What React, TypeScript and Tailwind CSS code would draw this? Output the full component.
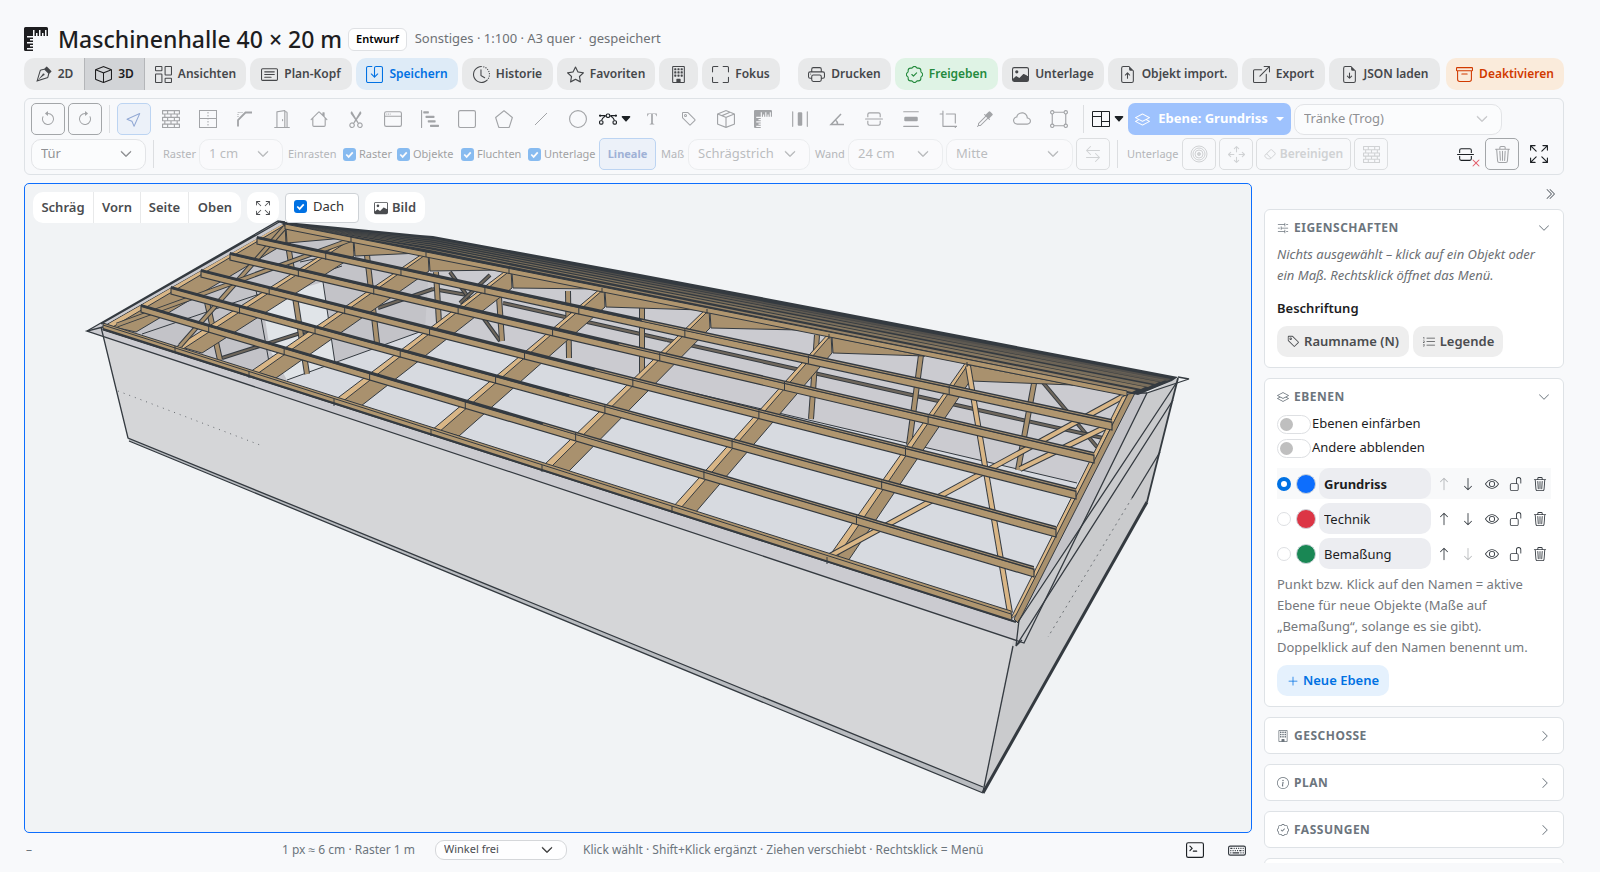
import type { ReactNode } from 'react';
import type { IconType } from 'react-icons';
import {
  BsArchive,
  BsArrowClockwise,
  BsArrowCounterclockwise,
  BsArrowDown,
  BsArrowLeftRight,
  BsArrowsFullscreen,
  BsArrowsMove,
  BsArrowUp,
  BsBarChartSteps,
  BsBezier,
  BsBoundingBoxCircles,
  BsBox,
  BsBoxArrowUpRight,
  BsBoxSeam,
  BsBricks,
  BsBuilding,
  BsCardText,
  BsCaretDownFill,
  BsChevronDoubleRight,
  BsChevronDown,
  BsChevronRight,
  BsCircle,
  BsClockHistory,
  BsCloud,
  BsColumnsGap,
  BsCrop,
  BsCursor,
  BsDistributeHorizontal,
  BsDistributeVertical,
  BsDoorOpen,
  BsEraser,
  BsEye,
  BsEyedropper,
  BsFileEarmarkArrowDown,
  BsFileEarmarkArrowUp,
  BsFonts,
  BsFullscreen,
  BsHouse,
  BsHr,
  BsImage,
  BsInfoCircle,
  BsKeyboard,
  BsLayers,
  BsListOl,
  BsPatchCheck,
  BsPentagon,
  BsPlusLg,
  BsPrinter,
  BsRulers,
  BsScissors,
  BsSliders2,
  BsSquare,
  BsStar,
  BsTag,
  BsTerminal,
  BsTrash3,
  BsUnlock,
  BsVectorPen,
  BsWindow,
  BsX,
} from 'react-icons/bs';

type Pt = [number, number];

/* ---------- small icons that the icon set lacks ---------- */

function IconSave({ size = 17 }: { size?: number }) {
  return (
    <svg width={size} height={size} viewBox="0 0 16 16" fill="none" stroke="currentColor" strokeLinecap="round" strokeLinejoin="round">
      <path d="M5.5 .5H2A1.5 1.5 0 0 0 .5 2v12A1.5 1.5 0 0 0 2 15.500h12a1.500 1.500 0 0 0 1.500-1.500V2A1.500 1.500 0 0 0 14 .5H9.500A1.500 1.500 0 0 0 8 2v8" />
      <path d="M5 7.500l3 3 3-3" />
    </svg>
  );
}

function IconWindowPane() {
  return (
    <svg width="18" height="18" viewBox="0 0 18 18" fill="none" stroke="currentColor">
      <rect x=".5" y=".5" width="17" height="17" />
      <path d="M.5 8.500h17" />
      <path d="M9 2v14" strokeDasharray="1.500 1.500" />
    </svg>
  );
}

function IconBevel() {
  return (
    <svg width="18" height="18" viewBox="0 0 18 18" fill="none" stroke="currentColor">
      <path d="M2 16.500V10L9.500 2.500H16" strokeWidth="1.800" />
      <path d="M2 7V2.500h5" strokeDasharray="1 1" />
    </svg>
  );
}

function IconAngle() {
  return (
    <svg width="18" height="18" viewBox="0 0 18 18" fill="none" stroke="currentColor" strokeWidth="1.500">
      <path d="M13 4L3 14.500h13" />
      <path d="M7.500 10c1.500 1 2 2.500 2 4.500" />
    </svg>
  );
}

function IconLine() {
  return (
    <svg width="18" height="18" viewBox="0 0 18 18" fill="none" stroke="currentColor">
      <path d="M3 15L15 3" />
    </svg>
  );
}

function IconFloorPlan() {
  return (
    <svg width="18" height="18" viewBox="0 0 18 18" fill="none" stroke="currentColor">
      <path d="M.5 1.500h17v15H.5z" />
      <path d="M.5 6.500h9M9.500 1.500v15M9.500 11.500h8" />
    </svg>
  );
}

function IconRings() {
  return (
    <svg width="18" height="18" viewBox="0 0 18 18" fill="none" stroke="currentColor">
      <circle cx="9" cy="9" r="8" />
      <circle cx="9" cy="9" r="6" />
      <circle cx="9" cy="9" r="4" />
      <circle cx="9" cy="9" r="1.500" fill="currentColor" />
    </svg>
  );
}

/* ---------- form controls ---------- */

function Tick({ label, className = '', textClass = '' }: { label: string; className?: string; textClass?: string }) {
  return (
    <label className={`flex items-center ${className}`}>
      <span className="grid shrink-0">
        <input
          type="checkbox"
          defaultChecked
          className="col-start-1 row-start-1 size-[13px] appearance-none rounded-[3px] bg-[#0071e3]"
        />
        <svg className="pointer-events-none col-start-1 row-start-1 size-[13px]" viewBox="0 0 12 12" fill="none" stroke="#fff" strokeWidth="1.600">
          <path d="M3 6l2.200 2.200L9 4" />
        </svg>
      </span>
      <span className={textClass}>{label}</span>
    </label>
  );
}

function Picker({
  label,
  value,
  className = '',
  selectClass = 'h-[31px] rounded-[10px] pl-[9px] text-[13px]',
}: {
  label: string;
  value: string;
  className?: string;
  selectClass?: string;
}) {
  return (
    <span className={`grid shrink-0 items-center ${className}`}>
      <select
        aria-label={label}
        defaultValue={value}
        className={`col-start-1 row-start-1 w-full appearance-none border border-[#d5d7da] bg-white/90 text-[#4a4c4f] ${selectClass}`}
      >
        <option>{value}</option>
      </select>
      <BsChevronDown size={12} strokeWidth={1} className="pointer-events-none col-start-1 row-start-1 mr-[14px] justify-self-end" />
    </span>
  );
}

/* ---------- header ---------- */

type Action = { label?: string; icon: ReactNode; tone?: string; width: string };

const grey = 'bg-[#e8e9ea] text-[#45474a]';

const leftActions: Action[] = [
  { label: 'Plan-Kopf', icon: <BsCardText size={17} />, width: 'w-[102px]' },
  { label: 'Speichern', icon: <IconSave />, tone: 'bg-[#deebf7] text-[#0071e3]', width: 'w-[102px]' },
  { label: 'Historie', icon: <BsClockHistory size={17} />, width: 'w-[91px]' },
  { label: 'Favoriten', icon: <BsStar size={17} />, width: 'w-[98px]' },
  { icon: <BsBuilding size={17} />, width: 'w-[39px]' },
  { label: 'Fokus', icon: <BsFullscreen size={17} />, width: 'w-[78px]' },
];

const rightActions: Action[] = [
  { label: 'Drucken', icon: <BsPrinter size={17} />, width: 'w-[93px]' },
  { label: 'Freigeben', icon: <BsPatchCheck size={17} />, tone: 'bg-[#dff3e5] text-[#248a3d]', width: 'w-[103px]' },
  { label: 'Unterlage', icon: <BsImage size={17} />, width: 'w-[102px]' },
  { label: 'Objekt import.', icon: <BsFileEarmarkArrowUp size={17} />, width: 'w-[130px]' },
  { label: 'Export', icon: <BsBoxArrowUpRight size={17} />, width: 'w-[83px]' },
  { label: 'JSON laden', icon: <BsFileEarmarkArrowDown size={17} />, width: 'w-[111px]' },
];

function ActionButton({ label, icon, tone = grey, width }: Action) {
  return (
    <button
      aria-label={label ?? 'Gebäude'}
      className={`flex h-8 shrink-0 items-center justify-center gap-[6px] rounded-[10px] text-[12px] font-semibold whitespace-nowrap ${tone} ${width}`}
    >
      {icon}
      {label}
    </button>
  );
}

function Header() {
  return (
    <header>
      <div className="flex h-6 items-center">
        <BsRulers size={24} className="text-[#1d1d1f]" />
        <h1 className="ml-[10px] text-[23px] leading-6 font-medium whitespace-nowrap text-[#1d1d1f]">Maschinenhalle 40 × 20 m</h1>
        <span className="ml-[6px] flex h-[23px] items-center rounded-[6px] border border-[#dfe1e4] bg-white px-[7px] text-[11px] font-semibold text-black">
          Entwurf
        </span>
        <p className="ml-2 text-[13px] whitespace-pre text-[#6e7175]">Sonstiges · 1:100 · A3 quer ·  gespeichert</p>
      </div>
      <div className="mt-[7px] flex items-center gap-1">
        <div className="flex h-8 overflow-hidden rounded-[10px] bg-[#e8e9ea] text-[12px] font-semibold text-[#45474a]">
          <button className="flex w-[60px] items-center justify-center gap-[6px]">
            <BsVectorPen size={17} />
            2D
          </button>
          <button className="flex w-[61px] items-center justify-center gap-[6px] border-x border-[#b4b6b9] bg-[#d2d4d7] text-[#1d1d1f]">
            <BsBox size={17} />
            3D
          </button>
          <button className="flex w-[101px] items-center justify-center gap-[6px]">
            <BsColumnsGap size={17} />
            Ansichten
          </button>
        </div>
        {leftActions.map((a, i) => (
          <ActionButton key={i} {...a} />
        ))}
        <div className="ml-auto flex gap-1">
          {rightActions.map((a) => (
            <ActionButton key={a.label} {...a} />
          ))}
        </div>
        <div className="ml-[2px]">
          <ActionButton label="Deaktivieren" icon={<BsArchive size={17} />} tone="bg-[#faebdb] text-[#d13a00]" width="w-[118px]" />
        </div>
      </div>
    </header>
  );
}

/* ---------- toolbar ---------- */

const tools: { name: string; icon: ReactNode }[] = [
  { name: 'Wand', icon: <BsBricks size={18} /> },
  { name: 'Fenster', icon: <IconWindowPane /> },
  { name: 'Ecke', icon: <IconBevel /> },
  { name: 'Tür', icon: <BsDoorOpen size={18} /> },
  { name: 'Haus', icon: <BsHouse size={18} /> },
  { name: 'Schneiden', icon: <BsScissors size={18} /> },
  { name: 'Tor', icon: <BsWindow size={18} /> },
  { name: 'Treppe', icon: <BsBarChartSteps size={18} /> },
  { name: 'Rechteck', icon: <BsSquare size={18} /> },
  { name: 'Polygon', icon: <BsPentagon size={18} /> },
  { name: 'Linie', icon: <IconLine /> },
  { name: 'Kreis', icon: <BsCircle size={18} /> },
];

const moreTools: { name: string; icon: ReactNode }[] = [
  { name: 'Text', icon: <BsFonts size={18} /> },
  { name: 'Etikett', icon: <BsTag size={16} /> },
  { name: 'Objekt', icon: <BsBoxSeam size={18} /> },
  { name: 'Maß', icon: <BsRulers size={18} /> },
  { name: 'Kette', icon: <BsDistributeHorizontal size={18} /> },
  { name: 'Winkel', icon: <IconAngle /> },
  { name: 'Schnitt', icon: <BsHr size={18} /> },
  { name: 'Verteilen', icon: <BsDistributeVertical size={18} /> },
  { name: 'Zuschneiden', icon: <BsCrop size={18} /> },
  { name: 'Pipette', icon: <BsEyedropper size={16} /> },
  { name: 'Wolke', icon: <BsCloud size={18} /> },
  { name: 'Bereich', icon: <BsBoundingBoxCircles size={18} /> },
];

const iconButton = 'flex h-8 w-[34px] shrink-0 items-center justify-center';

function Divider({ className = 'mx-1' }: { className?: string }) {
  return <span className={`h-7 w-px shrink-0 bg-[#dcdee1] ${className}`} />;
}

function Toolbar() {
  return (
    <div className="mt-2 flex flex-col gap-[3px] rounded-[6px] border border-[#dee2e6] px-[6px] py-1 text-[11px]">
      <div className="flex items-center gap-[3px] text-[#a2a4a7]">
        <button aria-label="Rückgängig" className={`${iconButton} rounded-[5px] border border-[#a3a6a9]`}>
          <BsArrowCounterclockwise size={16} />
        </button>
        <button aria-label="Wiederholen" className={`${iconButton} rounded-[5px] border border-[#a3a6a9]`}>
          <BsArrowClockwise size={16} />
        </button>
        <Divider />
        <button aria-label="Auswahl" className={`${iconButton} rounded-[5px] border border-[#bcd4f2] bg-[#ecf1f9] text-[#91a8d4]`}>
          <BsCursor size={16} />
        </button>
        {tools.map((t) => (
          <button key={t.name} aria-label={t.name} className={iconButton}>
            {t.icon}
          </button>
        ))}
        <button aria-label="Kurve" className={`${iconButton} gap-[3px] text-[#1d2125]`}>
          <BsBezier size={18} />
          <BsCaretDownFill size={12} />
        </button>
        {moreTools.map((t) => (
          <button key={t.name} aria-label={t.name} className={iconButton}>
            {t.icon}
          </button>
        ))}
        <Divider />
        <button aria-label="Raumaufteilung" className={`${iconButton} gap-[3px] text-[#1d2125]`}>
          <IconFloorPlan />
          <BsCaretDownFill size={12} />
        </button>
        <button className="flex h-8 w-[163px] items-center justify-center gap-2 rounded-[7px] bg-[#9ec2fd] text-[13px] font-bold whitespace-nowrap text-white">
          <BsLayers size={15} />
          Ebene: Grundriss
          <svg width="8" height="4" viewBox="0 0 8 4" fill="currentColor">
            <path d="M0 0h8L4 4z" />
          </svg>
        </button>
        <Picker label="Objekttyp" value="Tränke (Trog)" className="w-[208px] opacity-60" />
      </div>

      <div className="flex items-center text-[#b4b6b9]">
        <Picker label="Bauteil" value="Tür" className="w-[115px] text-[#3a3c3f] opacity-60" />
        <Divider className="ml-[7px] mr-[9px]" />
        <span className="w-9">Raster</span>
        <Picker label="Raster" value="1 cm" className="w-[84px] text-[#3a3c3f] opacity-35" />
        <span className="ml-[5px] w-[55px]">Einrasten</span>
        <Tick label="Raster" className="w-[54px] gap-[3px] opacity-45" textClass="text-[#333]" />
        <Tick label="Objekte" className="w-16 gap-[3px] opacity-45" textClass="text-[#333]" />
        <Tick label="Fluchten" className="w-[67px] gap-[3px] opacity-45" textClass="text-[#333]" />
        <Tick label="Unterlage" className="w-[71px] gap-[3px] opacity-45" textClass="text-[#333]" />
        <button className="h-8 w-[57px] rounded-[5px] border border-[#bcd4f2] bg-[#ecf1f9] text-[11px] font-bold text-[#9fb1d6]">Lineale</button>
        <span className="ml-[5px] w-[27px]">Maß</span>
        <Picker label="Maßlinie" value="Schrägstrich" className="w-[122px] text-[#3a3c3f] opacity-35" />
        <span className="ml-[5px] w-[33px]">Wand</span>
        <Picker label="Wandstärke" value="24 cm" className="w-[95px] text-[#3a3c3f] opacity-35" />
        <Picker label="Wandachse" value="Mitte" className="ml-[3px] w-[127px] text-[#3a3c3f] opacity-35" />
        <button aria-label="Tauschen" className={`${iconButton} ml-[3px] rounded-[5px] border border-[#dcdee0] text-[#d0d2d4]`}>
          <BsArrowLeftRight size={16} />
        </button>
        <Divider className="ml-[7px] mr-[9px]" />
        <span className="w-[55px]">Unterlage</span>
        <div className="flex gap-[3px] text-[#d0d2d4]">
          <button aria-label="Kalibrieren" className={`${iconButton} rounded-[5px] border border-[#dcdee0]`}>
            <IconRings />
          </button>
          <button aria-label="Verschieben" className={`${iconButton} rounded-[5px] border border-[#dcdee0]`}>
            <BsArrowsMove size={17} />
          </button>
          <button className="flex h-8 w-[95px] items-center justify-center gap-1 rounded-[5px] border border-[#dcdee0] text-[12px] font-semibold">
            <BsEraser size={12} />
            Bereinigen
          </button>
          <button aria-label="Wände erkennen" className={`${iconButton} rounded-[5px] border border-[#dcdee0]`}>
            <BsBricks size={17} />
          </button>
        </div>
        <div className="ml-auto flex items-center gap-[3px] pr-px text-[#1d2125]">
          <button aria-label="Schnitt löschen" className={iconButton}>
            <span className="relative">
              <BsHr size={17} />
              <BsX size={16} className="absolute -right-[10px] -bottom-2 text-[#e35d6a]" />
            </span>
          </button>
          <button aria-label="Löschen" className={`${iconButton} rounded-[5px] border border-[#a3a6a9] text-[#a2a4a7]`}>
            <BsTrash3 size={17} />
          </button>
          <button aria-label="Vollbild" className={iconButton}>
            <BsArrowsFullscreen size={18} />
          </button>
        </div>
      </div>
    </div>
  );
}

/* ---------- 3D view ---------- */

const INK = '#343a40';
const WOOD = '#a9916e';
const WOOD_LIGHT = '#d9b686';

// rafter feet and heads, from the left gable to the right one
const ridge: Pt[] = [[283, 224], [351, 237], [426, 252], [509, 269], [602, 288], [707, 309], [829, 334], [967, 362], [1127, 393]];
const eave: Pt[] = [[103, 326], [175, 347], [249, 372], [334, 400], [431, 430], [542, 466], [672, 507], [827, 558], [1011, 619]];
const footWidth = [33, 27, 27, 27, 28, 26, 23, 19, 6];

// purlins between eave and ridge, upper one first
const purlins: [Pt, Pt][] = [
  [[257, 238], [1112, 422]],
  [[230, 254], [1094, 455]],
  [[201, 271], [1076, 491]],
  [[171, 288], [1056, 529]],
  [[141, 306], [1034, 569]],
];

const posts: [Pt, Pt][] = [
  [[286, 231], [293, 277]],
  [[207, 302], [220, 360]],
  [[295, 297], [307, 374]],
  [[367, 255], [377, 343]],
  [[436, 272], [439, 323]],
  [[499, 297], [502, 341]],
  [[568, 291], [569, 358]],
  [[642, 308], [642, 374]],
  [[817, 335], [811, 419]],
  [[921, 355], [909, 445]],
  [[1035, 378], [1018, 470]],
];

const braces: [Pt, Pt][] = [
  [[222, 358], [310, 330]],
  [[378, 308], [433, 289]],
  [[433, 289], [467, 295]],
  [[450, 272], [500, 341]],
  [[490, 275], [460, 303]],
  [[1040, 379], [1097, 447]],
  [[503, 303], [667, 340]],
  [[667, 340], [1103, 438]],
];

const roofBraces: [Pt, Pt][] = [
  [[285, 227], [180, 346]],
  [[117, 325], [350, 240]],
  [[830, 556], [1122, 397]],
  [[1010, 613], [968, 366]],
  [[1020, 469], [1112, 424]],
];

// far purlins: height of the line where the roof edge bends, and its right end
const farPurlins: [number, Pt][] = [
  [250, [1136, 390]],
  [247, [1145, 387]],
  [245, [1152, 385]],
  [243, [1159, 382]],
  [241, [1165, 380]],
  [239, [1171, 379]],
];

const pts = (list: Pt[]) => list.map((p) => p.join(',')).join(' ');
const mix = (a: Pt, b: Pt, t: number): Pt => [a[0] + (b[0] - a[0]) * t, a[1] + (b[1] - a[1]) * t];

// where a purlin crosses a rafter
function cross([a, b]: [Pt, Pt], [c, d]: [Pt, Pt]): Pt {
  const r = [b[0] - a[0], b[1] - a[1]];
  const s = [d[0] - c[0], d[1] - c[1]];
  const t = ((c[0] - a[0]) * s[1] - (c[1] - a[1]) * s[0]) / (r[0] * s[1] - r[1] * s[0]);
  return mix(a, b, t);
}

function Bar({ line: [a, b], width, fill }: { line: [Pt, Pt]; width: number; fill: string }) {
  return (
    <g>
      <line x1={a[0]} y1={a[1]} x2={b[0]} y2={b[1]} stroke={INK} strokeWidth={width} />
      <line x1={a[0]} y1={a[1]} x2={b[0]} y2={b[1]} stroke={fill} strokeWidth={width - 2} />
    </g>
  );
}

function Purlin({ line: [a, b], ticks }: { line: [Pt, Pt]; ticks: Pt[] }) {
  return (
    <g>
      <polygon points={pts([a, b, [b[0], b[1] + 8], [a[0], a[1] + 6]])} fill="#b0966f" stroke={INK} strokeWidth="1.200" />
      <polygon points={pts([[a[0], a[1] - 2], [b[0], b[1] - 3], [b[0], b[1] + 1], [a[0], a[1] + 1]])} fill={INK} />
      <line x1={mix(a, b, 0.45)[0]} y1={mix(a, b, 0.45)[1] - 0.5} x2={b[0]} y2={b[1] - 1} stroke={WOOD_LIGHT} strokeWidth="1" opacity=".7" />
      {ticks.map((t, i) => (
        <line key={i} x1={t[0]} y1={t[1] - 1} x2={t[0]} y2={t[1] + 7} stroke={INK} strokeWidth="1" />
      ))}
    </g>
  );
}

function Building() {
  return (
    <svg viewBox="25 184 1226 648" className="block h-full w-full" role="img" aria-label="3D-Ansicht der Halle">
      <defs>
        <clipPath id="roof-opening">
          <polygon points="103,326 283,224 1130,393 1012,620" />
        </clipPath>
      </defs>

      {/* outer walls */}
      <polygon points="101,327 1018,622 1013,646 983,792 128,438" fill="#d5d6d8" />
      <polygon points="1178,378 1147,502 983,792 1013,640 1024,600 1100,450" fill="#cacbcd" />
      <polygon points="1146,393 1178,378 1024,643 1012,622 1135,392" fill="#cacbcd" />
      <polygon points="1127,393 1147,393 1078,530 1016,622" fill="#c3c3c8" />
      <polygon points="103,326 1012,620 1024,643 87,331" fill="#cbcbd0" />
      <polygon points="128,438 983,787 983,793 129,441" fill="#b9bcc0" />
      <polygon points="278,221 283,224 103,327 87,331" fill="#cbcbd0" />

      {/* inside */}
      <g clipPath="url(#roof-opening)">
        <polygon points="103,326 283,224 1130,393 1012,620" fill="#d7dae0" />
        <polygon points="425,330 1077,483 1130,393 283,224 420,245" fill="#cbcbd0" />
        <polygon points="100,326 283,220 430,250 425,330 287,380 150,430" fill="#c3c3c8" />
        <polygon points="262,300 323,282 335,363 287,380 270,350" fill="#e0e4e8" />
        <polyline points="287,380 425,330 1077,483" fill="none" stroke={INK} strokeWidth="1" />
        <path d="M142 334l200-68M256 290l13 72M323 282l12 81M300 262l105-22M400 320l25 10" fill="none" stroke={INK} strokeWidth="1" />
        {braces.map((b, i) => (
          <Bar key={i} line={b} width={4} fill="#6f675c" />
        ))}
        {posts.map((p, i) => (
          <Bar key={i} line={p} width={6} fill={WOOD} />
        ))}
        {/* far side of the rafters */}
        {ridge.slice(0, 8).map((r, i) => {
          const next = ridge[i + 1];
          return (
            <polygon
              key={i}
              points={pts([[r[0] + 3, r[1] + 3], [next[0] - (i > 4 ? i * 12 - 30 : 6), next[1] - (i > 4 ? i * 2 - 6 : -1)], [r[0] + 4, r[1] + 19]])}
              fill={WOOD}
              stroke={INK}
              strokeWidth="1"
            />
          );
        })}
        {ridge.slice(0, 8).map((r, i) => {
          const e = eave[i];
          return (
            <g key={i} stroke={INK} strokeWidth="1">
              <polygon points={pts([[r[0] + 2, r[1]], [r[0] + 3, r[1] + 19], [e[0] + footWidth[i], e[1] + 6], [e[0] + 6, e[1]]])} fill={WOOD} />
              <polygon points={pts([[r[0] - 1, r[1]], [r[0] + 2, r[1] + 1], [e[0] + 8, e[1] + 2], [e[0] + 1, e[1]]])} fill={WOOD_LIGHT} />
            </g>
          );
        })}
        {roofBraces.map((b, i) => (
          <Bar key={i} line={b} width={i < 2 ? 5 : 6} fill={i < 2 ? WOOD : WOOD_LIGHT} />
        ))}
      </g>

      {/* right gable rafter */}
      <polygon points="1122,397 1128,394 1018,613 1010,620" fill={WOOD_LIGHT} stroke={INK} strokeWidth="1" />
      <polygon points="1128,394 1135,393 1018,623 1014,619" fill={WOOD} stroke={INK} strokeWidth="1" />

      {purlins.map((p, i) => (
        <Purlin key={i} line={p} ticks={ridge.slice(1, 8).map((r, k) => cross(p, [r, eave[k + 1]]))} />
      ))}

      {/* eave purlin */}
      <polygon points="103,323 1011,611 1012,621 103,330" fill="#b0966f" stroke={INK} strokeWidth="1" />
      <path d="M103 325L1011 614" stroke={INK} strokeWidth="1" />
      <path d="M103 329L1016 622" stroke={INK} strokeWidth="2" />
      {eave.slice(1, 8).map((e, i) => (
        <line key={i} x1={e[0]} y1={e[1] - 1} x2={e[0]} y2={e[1] + 6} stroke={INK} />
      ))}

      {/* far roof side seen edge-on, closely stacked purlins */}
      <polygon points="276,221 420,235 433,236 640,274 850,314 1178,377 1172,381 1138,395 1127,393 283,224" fill={INK} />
      {farPurlins.map(([y, e], i) => (
        <polygon
          key={i}
          points={pts([[290, 225], [433, y], e, [e[0] - 4, e[1] + 2], [433, y + 0.6]])}
          fill={WOOD}
          opacity={0.85 - i * 0.12}
        />
      ))}
      <polygon points="285,224 1127,391 1127,396 285,229" fill="#b0966f" stroke={INK} strokeWidth="1" />
      {ridge.slice(1, 8).map((r, i) => (
        <line key={i} x1={r[0]} y1={r[1]} x2={r[0]} y2={r[1] + 5} stroke={INK} />
      ))}

      {/* outlines */}
      <g fill="none" stroke={INK} strokeWidth="1.300">
        <path d="M103 327L87 331L1024 643L1147 393L1189 379L1178 377" />
        <path d="M87 331L278 221L285 222M101 324L281 221" />
        <path d="M101 327L128 438L983 787M129 441L983 793" />
        <path d="M1135 393L1147 393M1177 382L1018 622M1173 400L1016 646L1019 620M1022 640L1016 646" />
        <path d="M1178 378L1147 502" strokeWidth="1.800" />
        <path d="M1147 502L983 793" strokeWidth="3" />
        <path d="M1013 646L983 792" />
        <path d="M1160 452L1132 498" />
        <path d="M1132 498L1048 637" strokeWidth="1" strokeDasharray="2 4" opacity=".6" />
        <path d="M118 391L260 445" strokeWidth="1" strokeDasharray="1 5" opacity=".7" />
      </g>
    </svg>
  );
}

function Viewport() {
  const views = [
    { label: 'Schräg', width: 'w-[61px]' },
    { label: 'Vorn', width: 'w-[47px]' },
    { label: 'Seite', width: 'w-12' },
    { label: 'Oben', width: 'w-[52px]' },
  ];
  return (
    <div className="relative min-h-0 flex-1 overflow-hidden rounded-[5px] border border-[#0d6efd] bg-[#f1f3f5]">
      <Building />
      <div className="absolute top-2 left-2 flex items-start text-[13px] font-semibold text-[#4a4c4f]">
        <div className="flex h-[31px] divide-x divide-[#e8e9ea] overflow-hidden rounded-[10px] bg-white">
          {views.map((v) => (
            <button key={v.label} className={v.width}>
              {v.label}
            </button>
          ))}
        </div>
        <button aria-label="Einpassen" className="ml-[6px] flex h-[31px] w-8 items-center justify-center rounded-[10px] bg-white">
          <BsArrowsFullscreen size={14} />
        </button>
        <div className="ml-[6px] mt-px flex h-[30px] w-[74px] items-start rounded-[4px] border border-[#ced2d6] bg-white pt-[3px] pl-2 font-normal text-[#333]">
          <Tick label="Dach" className="gap-[6px]" />
        </div>
        <button className="ml-[6px] flex h-[31px] w-[60px] items-center justify-center gap-1 rounded-[10px] bg-white">
          <BsImage size={14} />
          Bild
        </button>
      </div>
    </div>
  );
}

function StatusBar() {
  return (
    <div className="flex h-[30px] items-center pt-[3px] text-[12px] whitespace-nowrap text-[#6c757d]">
      <span className="w-[258px] pl-[2px]">–</span>
      <span className="w-[153px]">1 px ≈ 6 cm · Raster 1 m</span>
      <Picker
        label="Winkel"
        value="Winkel frei"
        className="w-[132px] text-[#333]"
        selectClass="h-5 rounded-[9px] pl-2 text-[11px]"
      />
      <span className="ml-4">Klick wählt · Shift+Klick ergänzt · Ziehen verschiebt · Rechtsklick = Menü</span>
      <button aria-label="Befehlszeile" className="ml-auto text-[#1d2125]">
        <BsTerminal size={18} />
      </button>
      <button aria-label="Tastenkürzel" className="mr-[6px] ml-6 text-[#343a40]">
        <BsKeyboard size={18} />
      </button>
    </div>
  );
}

/* ---------- sidebar ---------- */

function PanelHead({ icon: Icon, title, open = false }: { icon: IconType; title: string; open?: boolean }) {
  return (
    <button className="flex w-full items-center gap-[5px] text-[12px] leading-[21px] font-bold tracking-[0.5px] text-[#6c757d]">
      <Icon size={12} />
      {title}
      {open ? <BsChevronDown size={12} className="mr-px ml-auto" /> : <BsChevronRight size={12} className="ml-auto" />}
    </button>
  );
}

const layers = [
  { name: 'Grundriss', color: 'bg-[#0d6efd]', active: true },
  { name: 'Technik', color: 'bg-[#dc3545]', active: false },
  { name: 'Bemaßung', color: 'bg-[#198754]', active: false },
];

function Switch({ label }: { label: string }) {
  return (
    <label className="flex h-6 items-center gap-px text-[#1d1d1f]">
      <input
        type="checkbox"
        role="switch"
        className="h-[19px] w-[34px] shrink-0 appearance-none rounded-full border border-[#dee0e3] bg-white before:m-[2px] before:block before:size-[13px] before:rounded-full before:bg-[#bfbfbf]"
      />
      {label}
    </label>
  );
}

function Sidebar() {
  const card = 'shrink-0 rounded-[6px] border border-[#dee2e6] bg-white px-3';
  return (
    <aside className="flex w-[300px] shrink-0 flex-col gap-[10px] overflow-hidden text-[13px]">
      <button aria-label="Seitenleiste einklappen" className="mr-2 -mb-[6px] flex h-[22px] shrink-0 items-center self-end text-[#495057]">
        <BsChevronDoubleRight size={12} />
      </button>

      <section className={`${card} pt-[7px] pb-[10px]`}>
        <PanelHead icon={BsSliders2} title="EIGENSCHAFTEN" open />
        <p className="mt-[6px] leading-[21px] text-[#6c6f73] italic">
          Nichts ausgewählt – klick auf ein Objekt oder ein Maß. Rechtsklick öffnet das Menü.
        </p>
        <h3 className="mt-3 leading-5 font-semibold text-[#1d1d1f]">Beschriftung</h3>
        <div className="mt-2 flex gap-1 font-semibold text-[#4a4c4f]">
          <button className="flex h-[31px] w-[132px] items-center justify-center gap-1 rounded-[10px] bg-[#eee]">
            <BsTag size={13} />
            Raumname (N)
          </button>
          <button className="flex h-[31px] w-[90px] items-center justify-center gap-1 rounded-[10px] bg-[#eee]">
            <BsListOl size={14} />
            Legende
          </button>
        </div>
      </section>

      <section className={`${card} pt-[7px] pb-[10px]`}>
        <PanelHead icon={BsLayers} title="EBENEN" open />
        <div className="mt-[5px]">
          <Switch label="Ebenen einfärben" />
          <Switch label="Andere abblenden" />
        </div>
        <div className="mt-2 flex flex-col gap-1">
          {layers.map((l, i) => (
            <div key={l.name} className={`flex h-[31px] items-center ${l.active ? 'bg-[#f8f9fa]' : ''}`}>
              <input
                type="radio"
                name="layer"
                aria-label={`${l.name} aktiv`}
                defaultChecked={l.active}
                className="size-[14px] appearance-none rounded-full border border-[#dee0e3] bg-white checked:border-4 checked:border-[#0071e3]"
              />
              <button aria-label={`Farbe ${l.name}`} className={`ml-[5px] size-5 rounded-full border border-[#ced4da] ${l.color}`} />
              <input
                aria-label={`Name ${l.name}`}
                defaultValue={l.name}
                className={`ml-[3px] h-[31px] w-28 rounded-[10px] bg-[#ecedf1] px-[5px] text-[13px] text-[#1d1d1f] ${l.active ? 'font-bold' : ''}`}
              />
              <div className="flex flex-1 items-center justify-between pr-1 pl-[6px] text-[#343a40]">
                <button aria-label="Nach oben" className={i === 0 ? 'opacity-35' : ''}>
                  <BsArrowUp size={14} />
                </button>
                <button aria-label="Nach unten" className={i === 2 ? 'opacity-35' : ''}>
                  <BsArrowDown size={14} />
                </button>
                <button aria-label="Sichtbarkeit">
                  <BsEye size={14} />
                </button>
                <button aria-label="Sperren">
                  <BsUnlock size={14} />
                </button>
                <button aria-label="Ebene löschen">
                  <BsTrash3 size={14} />
                </button>
              </div>
            </div>
          ))}
        </div>
        <p className="mt-[5px] leading-[21px] text-[#75787c]">
          Punkt bzw. Klick auf den Namen = aktive Ebene für neue Objekte (Maße auf „Bemaßung“, solange es sie gibt). Doppelklick auf den Namen benennt um.
        </p>
        <button className="mt-[7px] flex h-[31px] w-28 items-center justify-center gap-1 rounded-[10px] bg-[#e5f1fd] font-semibold text-[#0071e3]">
          <BsPlusLg size={12} />
          Neue Ebene
        </button>
      </section>

      <section className={`${card} py-[7px]`}>
        <PanelHead icon={BsBuilding} title="GESCHOSSE" />
      </section>
      <section className={`${card} py-[7px]`}>
        <PanelHead icon={BsInfoCircle} title="PLAN" />
      </section>
      <section className={`${card} py-[7px]`}>
        <PanelHead icon={BsPatchCheck} title="FASSUNGEN" />
      </section>
      <section className={`${card} h-9`} />
    </aside>
  );
}

export default function App() {
  return (
    <div className="flex h-screen flex-col overflow-hidden bg-[#f8f9fb] pt-[27px] pr-9 pb-[9px] pl-6 font-['Noto_Sans','Liberation_Sans',sans-serif]">
      <Header />
      <Toolbar />
      <div className="mt-2 flex min-h-0 flex-1 gap-3">
        <main className="flex min-w-0 flex-1 flex-col">
          <Viewport />
          <StatusBar />
        </main>
        <Sidebar />
      </div>
    </div>
  );
}
